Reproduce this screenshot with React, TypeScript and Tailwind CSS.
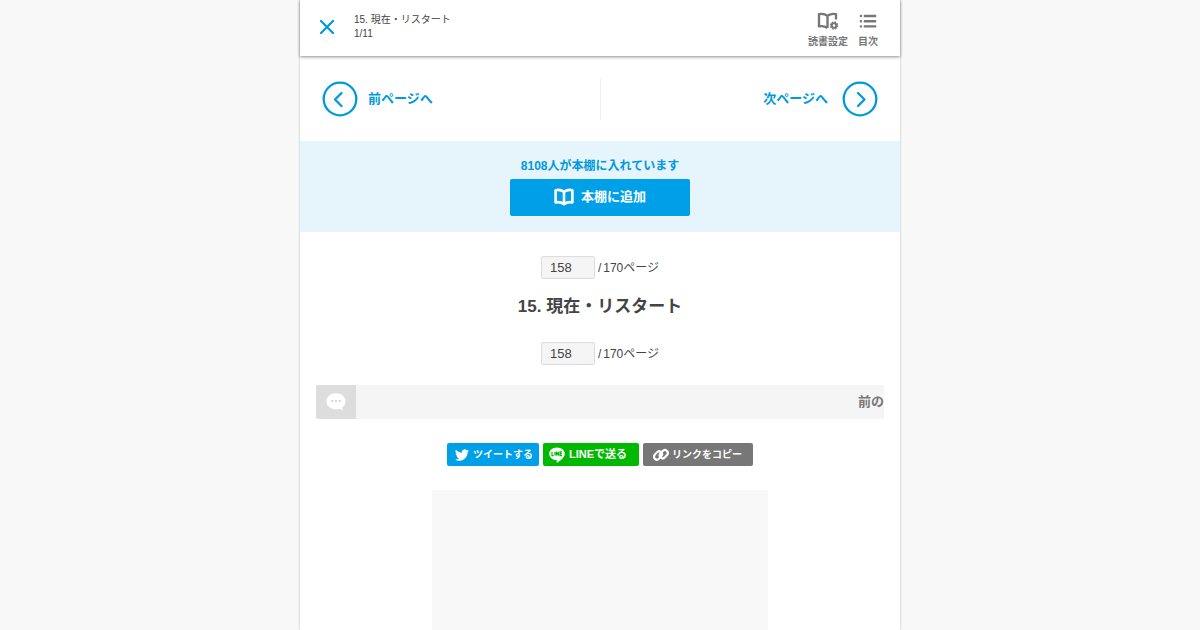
import { useState } from 'react';
import type { ReactNode } from 'react';

const EPISODE_TITLE = '15. 現在・リスタート';
const TOTAL_PAGES = 170;

function BookIcon({ className }: { className?: string }) {
  return (
    <svg viewBox="0 0 20 18" className={className} fill="none" stroke="currentColor" strokeWidth="2.6" strokeLinejoin="round" aria-hidden="true">
      <path d="M10 3.8C7.6 2.1 4.6 1.5 1.6 2.2v12.2c3-.7 6-.1 8.4 1.8 2.4-1.9 5.4-2.5 8.4-1.8V2.2C15.4 1.5 12.4 2.1 10 3.8Z" />
      <path d="M10 3.8V16" />
    </svg>
  );
}

function BookGearIcon() {
  return (
    <svg viewBox="0 0 22 18" className="h-[18px] w-[22px]" fill="none" stroke="currentColor" aria-hidden="true">
      <path
        d="M10.5 16C8 14.3 5 13.700 2 14.4V2.200c3-.7 6-.1 8.500 1.600C13 2.100 16 1.500 19 2.200v5.300M10.500 3.800V16"
        strokeWidth="2.4"
        strokeLinejoin="round"
      />
      <circle cx="17" cy="13.5" r="2.3" strokeWidth="2" />
      <circle cx="17" cy="13.5" r="3.5" strokeWidth="1.4" strokeDasharray="1.6 1.149" />
    </svg>
  );
}

function ListIcon() {
  return (
    <svg viewBox="0 0 18 18" className="size-[18px]" fill="none" stroke="currentColor" strokeWidth="2.4" strokeLinecap="round" aria-hidden="true">
      <path d="M5.8 4h10.4M5.8 9.200h10.4M5.8 14.4h10.4M1.9 4h.1M1.9 9.200h.1M1.9 14.4h.1" />
    </svg>
  );
}

function CircleArrow({ direction }: { direction: 'prev' | 'next' }) {
  return (
    <svg viewBox="0 0 36 36" className="size-9 shrink-0" fill="none" stroke="currentColor" strokeWidth="2.3" aria-hidden="true">
      <circle cx="18" cy="18" r="16.3" />
      <path
        d={direction === 'prev' ? 'M19.5 12L13 18.5l6.5 6.5' : 'M16 12l6.5 6.5L16 25'}
        strokeLinecap="round"
        strokeLinejoin="round"
      />
    </svg>
  );
}

function TwitterIcon() {
  return (
    <svg viewBox="0 0 24 24" className="size-[14px]" fill="currentColor" aria-hidden="true">
      <path d="M23.95 4.57a10 10 0 0 1-2.82.77 4.96 4.96 0 0 0 2.16-2.72c-.95.56-2 .96-3.13 1.19a4.92 4.92 0 0 0-8.38 4.48C7.69 8.09 4.07 6.13 1.64 3.16a4.92 4.92 0 0 0 1.52 6.57 4.9 4.9 0 0 1-2.23-.61v.06a4.92 4.92 0 0 0 3.95 4.83 5 5 0 0 1-2.21.08 4.94 4.94 0 0 0 4.6 3.42A9.87 9.87 0 0 1 0 19.54a14 14 0 0 0 7.55 2.21c9.05 0 14-7.5 14-13.98 0-.21 0-.42-.02-.63a9.94 9.94 0 0 0 2.42-2.57Z" />
    </svg>
  );
}

function LineIcon() {
  return (
    <svg viewBox="0 0 16 16" className="size-4" aria-hidden="true">
      <path d="M8 .4c4.3 0 7.8 2.8 7.8 6.3 0 3.9-4.9 7.1-7.3 8.8-.7.4-.9.1-.8-.5l.1-1.700C3.4 12.9.2 10.2.2 6.700.2 3.200 3.700.4 8 .4Z" fill="white" />
      <path d="M3 4.8v3.8h1.700M6 4.8v3.8M7.4 8.600V4.8l2.100 3.8V4.8M13 4.8h-1.900v3.8H13M11.100 6.700h1.700" fill="none" stroke="#00b900" strokeWidth="1.2" />
    </svg>
  );
}

function LinkIcon() {
  return (
    <svg viewBox="0 0 16 14" className="h-[14px] w-4" fill="none" stroke="currentColor" strokeWidth="2.2" aria-hidden="true">
      <rect x="-4.5" y="-2.9" width="9" height="5.8" rx="2.9" transform="translate(5 7.5) rotate(-48)" />
      <rect x="-4.5" y="-2.9" width="9" height="5.8" rx="2.9" transform="translate(10.8 6.2) rotate(-48)" />
    </svg>
  );
}

function PageJump({ page, onChange }: { page: string; onChange: (value: string) => void }) {
  return (
    <label className="flex h-[23px] items-center justify-center text-xs">
      <input
        type="text"
        inputMode="numeric"
        aria-label="ページ番号"
        value={page}
        onChange={(e) => onChange(e.target.value)}
        className="h-[23px] w-[54px] rounded-xs border border-[#dddddd] bg-[#f5f5f5] px-2 text-[13px]"
      />
      <span className="ml-[3px]">/</span>
      <span className="ml-[2px]">{TOTAL_PAGES}ページ</span>
    </label>
  );
}

function HeaderButton({ icon, label }: { icon: ReactNode; label: string }) {
  return (
    <button type="button" className="flex flex-col items-center gap-1 text-[10px] leading-4 font-bold text-[#777777]">
      {icon}
      {label}
    </button>
  );
}

export default function App() {
  const [page, setPage] = useState('158');

  return (
    <div className="min-h-screen bg-[#f8f8f8] font-['Liberation_Sans','Noto_Sans_CJK_JP',sans-serif] text-[#444444]">
      <div className="mx-auto min-h-screen max-w-[600px] bg-white shadow-[0_0_2px_rgba(0,0,0,0.3)]">
        <header className="flex h-14 justify-between bg-white pr-[22px] pl-5 shadow-[0_1px_3px_rgba(0,0,0,0.45)]">
          <div className="flex gap-5">
            <button type="button" aria-label="閉じる" className="h-[54px] text-[#0099dd]">
              <svg viewBox="0 0 14 14" className="size-[14px]" stroke="currentColor" strokeWidth="2.2" strokeLinecap="round">
                <path d="M1 1l12 12M13 1L1 13" />
              </svg>
            </button>
            <div className="pt-[13px] text-[10px] leading-[14px]">
              <p>{EPISODE_TITLE}</p>
              <p>1/11</p>
            </div>
          </div>
          <div className="flex items-start gap-[10px] pt-3">
            <HeaderButton icon={<BookGearIcon />} label="読書設定" />
            <HeaderButton icon={<ListIcon />} label="目次" />
          </div>
        </header>

        <nav className="grid h-[85px] grid-cols-2 items-center text-[13px] font-bold text-[#0099dd]">
          <a href="#prev" className="flex items-center gap-[10px] pl-[22px]">
            <CircleArrow direction="prev" />
            前ページへ
          </a>
          <a href="#next" className="flex h-[42px] items-center justify-end gap-[14px] border-l border-[#eeeeee] pr-[22px]">
            次ページへ
            <CircleArrow direction="next" />
          </a>
        </nav>

        <section className="flex flex-col items-center gap-[5px] bg-[#e6f4fc] pt-[17px] pb-4 text-[#0099dd]">
          <p className="text-xs font-bold">8108人が本棚に入れています</p>
          <button type="button" className="flex h-[37px] w-[180px] items-center justify-center gap-[7px] rounded-xs bg-[#00a0e9] pb-[2px] text-[13px] font-bold text-white">
            <BookIcon className="h-[18px] w-5" />
            本棚に追加
          </button>
        </section>

        <main className="px-4 pt-6">
          <PageJump page={page} onChange={setPage} />
          <h1 className="mt-[15px] mb-[22px] text-center text-[17px] leading-[26px] font-bold">{EPISODE_TITLE}</h1>
          <PageJump page={page} onChange={setPage} />

          <div className="mt-5 flex h-[34px] items-center justify-between rounded-xs bg-[#f5f5f5]">
            <button type="button" aria-label="コメント" className="flex h-full w-10 items-center justify-center rounded-l-xs bg-[#dddddd]">
              <svg viewBox="0 0 20 18" className="h-[18px] w-5" aria-hidden="true">
                <path d="M10 .2c5.4 0 9.5 3.4 9.5 8 0 2.6-1.3 4.6-3.2 6.1l.4 2.9-3.3-1.2c-1 .3-2.2.4-3.4.4C4.6 16.4.5 12.8.5 8.2S4.6.2 10 .2Z" fill="white" />
                <g fill="#cccccc">
                  <circle cx="6.2" cy="8" r="1" />
                  <circle cx="10" cy="8" r="1" />
                  <circle cx="13.8" cy="8" r="1" />
                </g>
              </svg>
            </button>
            <p className="text-[13px] font-bold text-[#777777]">前の</p>
          </div>

          <div className="mt-6 flex justify-center gap-1 text-[10px] font-bold text-white">
            <a href="#tweet" className="flex h-[23px] w-[92px] items-center gap-1 rounded-xs bg-[#00a0e9] pl-2">
              <TwitterIcon />
              ツイートする
            </a>
            <a href="#line" className="flex h-[23px] w-24 items-center gap-1 rounded-xs bg-[#00b900] pl-[6px] text-[11px]">
              <LineIcon />
              LINEで送る
            </a>
            <button type="button" className="flex h-[23px] w-[110px] items-center gap-[3px] rounded-xs bg-[#777777] pl-[10px]">
              <LinkIcon />
              リンクをコピー
            </button>
          </div>

          <div className="mx-auto mt-6 h-[140px] max-w-[336px] bg-[#f8f8f8]" />
        </main>
      </div>
    </div>
  );
}
